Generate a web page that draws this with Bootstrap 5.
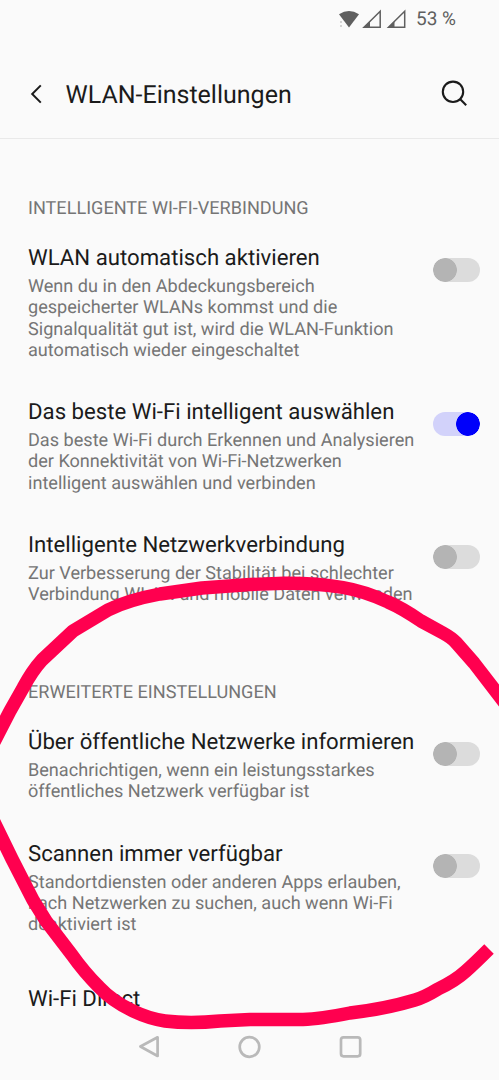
<!DOCTYPE html>
<html lang="de">
<head>
<meta charset="utf-8">
<meta name="viewport" content="width=device-width, initial-scale=1">
<title>WLAN-Einstellungen</title>
<link rel="stylesheet" href="https://cdn.jsdelivr.net/npm/bootstrap@5.3.0/dist/css/bootstrap.min.css">
<style>
  body { background: #fafafa; color: #1b1b1b; font-family: Roboto, "Liberation Sans", sans-serif; text-rendering: geometricPrecision; }
  .screen { width: 499px; height: 1080px; }
  .status-bar { height: 38px; padding: 0 43px 0 0; color: #5f5f5f; }
  .battery-text { font-size: 19px; line-height: 38px; margin-left: 9px; }
  .app-bar { height: 101px; padding: 12px 31px 0 30px; border-bottom: 1px solid #e9e9e9; }
  .app-title { font-size: 25px; line-height: 32px; font-weight: 400; margin-left: 22.5px; padding-top: 4px; }
  .settings { padding: 0 19px 0 28px; }
  .section-label { font-size: 18.1px; line-height: 22px; color: #757575; font-weight: 400; padding-top: 59px; }
  .section-label-next { padding-top: 76.5px; }
  .setting-group { padding-top: 23px; }
  .setting + .setting { margin-top: 36.2px; }
  .setting + .setting-single { margin-top: 48.7px; }
  .setting-text { padding-top: 1px; }
  .setting-name { font-size: 22.2px; line-height: 28px; font-weight: 400; margin-bottom: 4px; }
  .setting-info { font-size: 18.1px; line-height: 21.25px; color: #757575; white-space: nowrap; }
  .setting .form-switch { padding: 0; min-height: 0; margin-top: 15px; }
  .setting .form-check-input {
    float: none; display: block; margin: 0; width: 47px; height: 24px; border: 0; border-radius: 12px;
    background: radial-gradient(circle at 12px 12px, #b4b4b4 11.5px, #dcdcdc 12.2px);
  }
  .setting .form-check-input:checked { background: radial-gradient(circle at 35px 12px, #0000fa 11.5px, #d2d2fa 12.2px); }
  .nav-keys { top: 1034px; height: 26px; }
  .stroke-layer { z-index: 5; pointer-events: none; }
</style>
</head>
<body>
<div class="screen position-relative overflow-hidden">
  <div class="status-bar d-flex align-items-center justify-content-end">
    <svg width="70" height="22" viewBox="337 7 70 22" fill="none">
      <path d="M339 13.2Q349 6.6 359 13.2L349 26.5Z" fill="#5f5f5f"/>
      <path d="M340 21h2M340 25h2" stroke="#c8c8c8" stroke-width="1.6"/>
      <path d="M364 26.300L380.200 10.300V26.300Z" stroke="#5f5f5f" stroke-width="1.500"/>
      <path d="M388.500 26.300L404.700 10.300V26.300Z" stroke="#5f5f5f" stroke-width="1.500"/>
      <path d="M363 27L370 20V27ZM387.500 27L394.500 20V27Z" fill="#5f5f5f"/>
    </svg>
    <span class="battery-text">53 %</span>
  </div>

  <header class="app-bar d-flex align-items-center">
    <svg width="13" height="20" viewBox="0 0 13 20" fill="none" stroke="#1b1b1b" stroke-width="2"><path d="M10.800 1.400L2.200 10L10.800 18.600"/></svg>
    <h1 class="app-title mb-0">WLAN-Einstellungen</h1>
    <svg class="ms-auto" width="28" height="28" viewBox="440 80 28 28" fill="none" stroke="#1b1b1b" stroke-width="2.100"><circle cx="453" cy="91.800" r="10.200"/><path d="M459.800 98.800L466.200 105.200"/></svg>
  </header>

  <main class="settings">
    <h2 class="section-label mb-0">INTELLIGENTE WI-FI-VERBINDUNG</h2>
    <section class="setting-group">
      <div class="setting d-flex justify-content-between">
        <div class="setting-text"><h3 class="setting-name">WLAN automatisch aktivieren</h3>
          <div class="setting-info">Wenn du in den Abdeckungsbereich<br>gespeicherter WLANs kommst und die<br>Signalqualität gut ist, wird die WLAN-Funktion<br>automatisch wieder eingeschaltet</div></div>
        <div class="form-switch"><input class="form-check-input" type="checkbox" role="switch"></div>
      </div>
      <div class="setting d-flex justify-content-between">
        <div class="setting-text"><h3 class="setting-name">Das beste Wi-Fi intelligent auswählen</h3>
          <div class="setting-info">Das beste Wi-Fi durch Erkennen und Analysieren<br>der Konnektivität von Wi-Fi-Netzwerken<br>intelligent auswählen und verbinden</div></div>
        <div class="form-switch"><input class="form-check-input" type="checkbox" role="switch" checked></div>
      </div>
      <div class="setting d-flex justify-content-between">
        <div class="setting-text"><h3 class="setting-name">Intelligente Netzwerkverbindung</h3>
          <div class="setting-info">Zur Verbesserung der Stabilität bei schlechter<br>Verbindung WLAN und mobile Daten verwenden</div></div>
        <div class="form-switch"><input class="form-check-input" type="checkbox" role="switch"></div>
      </div>
    </section>

    <h2 class="section-label section-label-next mb-0">ERWEITERTE EINSTELLUNGEN</h2>
    <section class="setting-group">
      <div class="setting d-flex justify-content-between">
        <div class="setting-text"><h3 class="setting-name">Über öffentliche Netzwerke informieren</h3>
          <div class="setting-info">Benachrichtigen, wenn ein leistungsstarkes<br>öffentliches Netzwerk verfügbar ist</div></div>
        <div class="form-switch"><input class="form-check-input" type="checkbox" role="switch"></div>
      </div>
      <div class="setting d-flex justify-content-between">
        <div class="setting-text"><h3 class="setting-name">Scannen immer verfügbar</h3>
          <div class="setting-info">Standortdiensten oder anderen Apps erlauben,<br>nach Netzwerken zu suchen, auch wenn Wi-Fi<br>deaktiviert ist</div></div>
        <div class="form-switch"><input class="form-check-input" type="checkbox" role="switch"></div>
      </div>
      <div class="setting setting-single"><div class="setting-text"><h3 class="setting-name">Wi-Fi Direct</h3></div></div>
    </section>
  </main>

  <nav class="nav-keys position-absolute start-0 w-100">
    <svg class="d-block" width="499" height="26" viewBox="0 1034 499 26" fill="none" stroke="#b9b9b9" stroke-width="2.700" stroke-linejoin="round">
      <path d="M140.400 1046.500L157.600 1037.300V1056Z"/>
      <circle cx="249.500" cy="1047" r="9.800"/>
      <rect x="341" y="1037.300" width="19.200" height="19" rx="2.500"/>
    </svg>
  </nav>

  <svg class="stroke-layer position-absolute top-0 start-0" width="499" height="1080" viewBox="0 0 499 1080" fill="none" stroke="#ff004f" stroke-width="13.400" stroke-linejoin="round">
    <path d="M507 706L474 663L456 642.500Q452 638 443 633L421 621Q402 608 388 602Q364 591 343 587.500Q315 583 284 583.300L250 584.500L202 588L160 594Q128 600 108 610L73 631L42 660Q32 671 23 688L10 711L-8 746"/>
    <path d="M-8 818L12 859L33 900L46 921L72 955Q84 972 99 987Q112 1001 133 1011Q150 1019 165 1021Q190 1024 220 1021L250 1019.500H303Q320 1019 350 1013Q385 1009 415 1000Q425 997 438 989Q455 981 466 971Q475 963 489 949"/>
  </svg>
</div>
<script src="https://cdn.jsdelivr.net/npm/bootstrap@5.3.0/dist/js/bootstrap.bundle.min.js"></script>
</body>
</html>
